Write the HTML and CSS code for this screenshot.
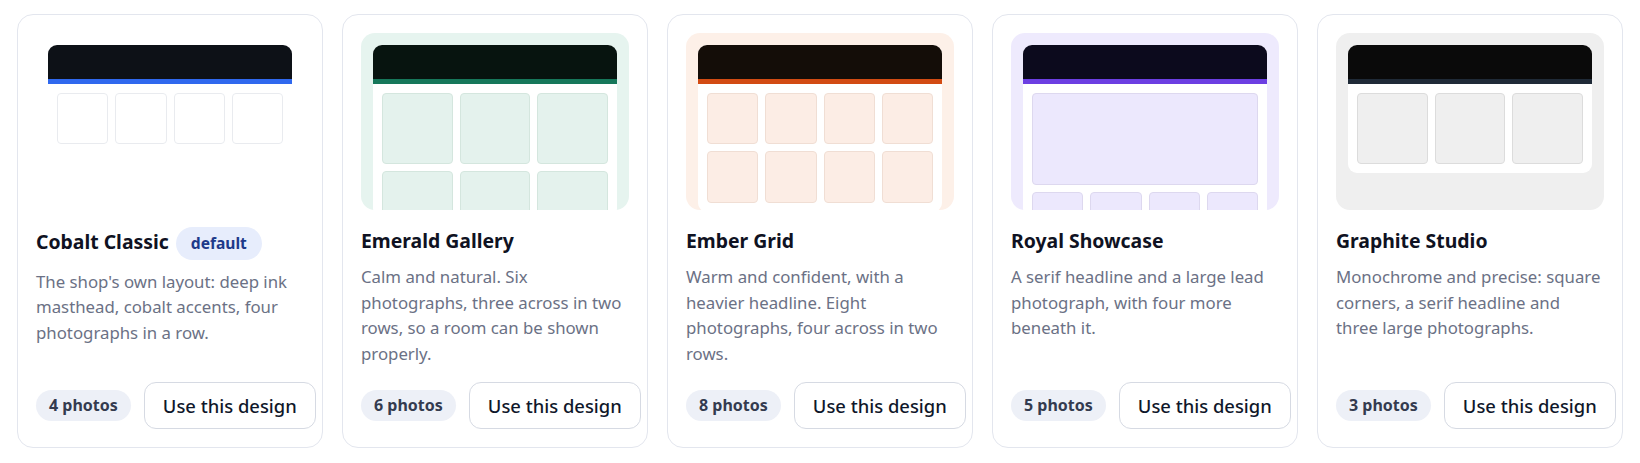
FILE: index.html
```html
<!DOCTYPE html>
<html lang="en">
<head>
<meta charset="utf-8">
<title>Designs</title>
<link rel="stylesheet" href="styles.css">
</head>
<body>
<main class="gallery">

  <article class="card">
    <div class="preview preview-cobalt">
      <div class="mock">
        <div class="mock-head"></div>
        <div class="mock-body cols-4">
          <span class="tile"></span><span class="tile"></span><span class="tile"></span><span class="tile"></span>
        </div>
      </div>
    </div>
    <div class="title-row">
      <h3 class="title">Cobalt Classic</h3>
      <span class="badge">default</span>
    </div>
    <p class="desc">The shop's own layout: deep ink masthead, cobalt accents, four photographs in a row.</p>
    <div class="foot">
      <span class="count">4 photos</span>
      <button class="use">Use this design</button>
    </div>
  </article>

  <article class="card">
    <div class="preview preview-emerald">
      <div class="mock">
        <div class="mock-head"></div>
        <div class="mock-body cols-3">
          <span class="tile"></span><span class="tile"></span><span class="tile"></span>
          <span class="tile"></span><span class="tile"></span><span class="tile"></span>
        </div>
      </div>
    </div>
    <div class="title-row">
      <h3 class="title">Emerald Gallery</h3>
    </div>
    <p class="desc">Calm and natural. Six photographs, three across in two rows, so a room can be shown properly.</p>
    <div class="foot">
      <span class="count">6 photos</span>
      <button class="use">Use this design</button>
    </div>
  </article>

  <article class="card">
    <div class="preview preview-ember">
      <div class="mock">
        <div class="mock-head"></div>
        <div class="mock-body cols-4">
          <span class="tile"></span><span class="tile"></span><span class="tile"></span><span class="tile"></span>
          <span class="tile"></span><span class="tile"></span><span class="tile"></span><span class="tile"></span>
        </div>
      </div>
    </div>
    <div class="title-row">
      <h3 class="title">Ember Grid</h3>
    </div>
    <p class="desc">Warm and confident, with a heavier headline. Eight photographs, four across in two rows.</p>
    <div class="foot">
      <span class="count">8 photos</span>
      <button class="use">Use this design</button>
    </div>
  </article>

  <article class="card">
    <div class="preview preview-royal">
      <div class="mock">
        <div class="mock-head"></div>
        <div class="mock-body cols-4">
          <span class="tile tile-lead"></span>
          <span class="tile"></span><span class="tile"></span><span class="tile"></span><span class="tile"></span>
        </div>
      </div>
    </div>
    <div class="title-row">
      <h3 class="title">Royal Showcase</h3>
    </div>
    <p class="desc">A serif headline and a large lead photograph, with four more beneath it.</p>
    <div class="foot">
      <span class="count">5 photos</span>
      <button class="use">Use this design</button>
    </div>
  </article>

  <article class="card">
    <div class="preview preview-graphite">
      <div class="mock">
        <div class="mock-head"></div>
        <div class="mock-body cols-3">
          <span class="tile"></span><span class="tile"></span><span class="tile"></span>
        </div>
      </div>
    </div>
    <div class="title-row">
      <h3 class="title">Graphite Studio</h3>
    </div>
    <p class="desc">Monochrome and precise: square corners, a serif headline and three large photographs.</p>
    <div class="foot">
      <span class="count">3 photos</span>
      <button class="use">Use this design</button>
    </div>
  </article>

</main>
</body>
</html>
```
FILE: styles.css
```css
* { box-sizing: border-box; }

body {
  margin: 0;
  background: #ffffff;
  font-family: "Noto Sans", "Open Sans", sans-serif;
  color: #111827;
}

.gallery {
  display: grid;
  grid-template-columns: repeat(5, minmax(0, 1fr));
  gap: 19px;
  padding: 14px 17px;
}

.card {
  min-width: 0;
  display: flex;
  flex-direction: column;
  border: 1px solid #e3e6ee;
  border-radius: 16px;
  padding: 18px;
  background: #ffffff;
}

/* preview */
.preview {
  height: 177px;
  border-radius: 14px;
  overflow: hidden;
  padding: 12px 12px 0;
}
.mock {
  background: #ffffff;
  border-radius: 9px;
  overflow: hidden;
}
.mock-head {
  height: 39px;
  border-bottom: 5px solid;
}
.mock-body {
  display: grid;
  gap: 7px;
  padding: 9px;
}
.cols-3 { grid-template-columns: repeat(3, 1fr); }
.cols-4 { grid-template-columns: repeat(4, 1fr); }
.tile {
  aspect-ratio: 1 / 1;
  border-radius: 4px;
  border: 1px solid;
}
.tile-lead {
  grid-column: 1 / -1;
  aspect-ratio: auto;
  height: 92px;
}

.preview-cobalt { background: #ffffff; }
.preview-cobalt .mock-head { background: #0d1117; border-color: #2f68ee; }
.preview-cobalt .tile { background: #ffffff; border-color: #e9ebef; }

.preview-emerald { background: #e6f4ef; }
.preview-emerald .mock-head { background: #07140f; border-color: #16775a; }
.preview-emerald .tile { background: #e4f2ed; border-color: #d4e6de; }

.preview-ember { background: #fdf0e8; }
.preview-ember .mock-head { background: #140d08; border-color: #d24b13; }
.preview-ember .tile { background: #fcede5; border-color: #f0ded4; }

.preview-royal { background: #eeeafd; }
.preview-royal .mock-head { background: #0c0a1d; border-color: #6c3ee2; }
.preview-royal .tile { background: #ece8fd; border-color: #ddd8ef; }

.preview-graphite { background: #efefef; }
.preview-graphite .mock-head { background: #0a0a0a; border-color: #1f2a37; }
.preview-graphite .tile { background: #efefef; border-color: #dcdcdc; }

/* text */
.title-row {
  display: flex;
  align-items: baseline;
  gap: 7px;
  margin-top: 17px;
}
.title {
  margin: 0;
  font-size: 19.4px;
  line-height: 28px;
  font-weight: 700;
  color: #0f1222;
}
.badge {
  font-size: 15.6px;
  line-height: 20.6px;
  font-weight: 700;
  color: #1e3a8a;
  background: #e7edfc;
  border-radius: 999px;
  padding: 6px 15px;
}
.desc {
  margin: 9px 0 0;
  font-size: 16.8px;
  line-height: 25.5px;
  color: #6b7185;
}

.foot {
  margin-top: auto;
  padding-top: 16px;
  display: flex;
  align-items: center;
  gap: 13px;
}
.count {
  flex-shrink: 0;
  white-space: nowrap;
  font-size: 16px;
  line-height: 21px;
  font-weight: 700;
  color: #343b4f;
  background: #edf0f7;
  border-radius: 999px;
  padding: 5px 13px;
}
.use {
  flex-shrink: 0;
  white-space: nowrap;
  height: 47px;
  padding: 0 18px;
  font-family: inherit;
  font-size: 18.4px;
  font-weight: 500;
  color: #0f172a;
  background: #ffffff;
  border: 1px solid #d6dae3;
  border-radius: 12px;
}
```
